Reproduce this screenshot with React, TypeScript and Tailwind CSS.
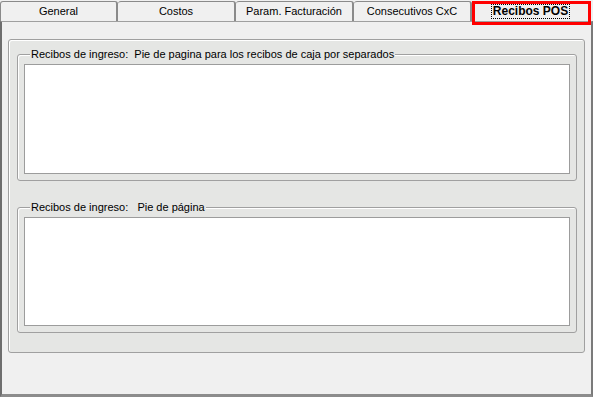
import React from "react";

const tabs = ["General", "Costos", "Param. Facturación", "Consecutivos CxC"];

function Group({ title, titleClass }: { title: string; titleClass?: string }) {
  return (
    <div className="relative h-full rounded-[3px] border border-[#a0a0a0] shadow-[inset_1px_1px_0_#ffffff] px-[6px] pt-[9px] pb-[6px]">
      <div className="absolute left-[12px] top-[-7px] bg-[#e5e6e4] px-[1px] leading-[13px] text-black whitespace-pre">
        {title}
      </div>
      <div className="h-full w-full border border-[#9c9c9c] bg-white" />
    </div>
  );
}

export default function App() {
  return (
    <div
      className="relative w-[593px] h-[397px] bg-[#f0f0f0] flex flex-col text-[11px] text-black overflow-hidden"
      style={{ fontFamily: '"Liberation Sans", Arial, sans-serif' }}
    >
      {/* tab strip */}
      <div className="flex h-[21px] pt-[1px]">
        {tabs.map((t, i) => (
          <div
            key={t}
            className={
              "w-[118px] h-[20px] flex items-center justify-center border-t border-r-2 border-[#8a8a8a] rounded-t-[3px] bg-[#f0f0f0] " +
              (i === 0 ? "border-l" : "")
            }
          >
            {t}
          </div>
        ))}
        <div className="w-[118px] h-[20px] flex items-center justify-center border-t border-r border-[#8a8a8a] rounded-t-[3px] bg-[#f0f0f0]">
          <span className="px-[1px] leading-[13px] font-bold text-[12px] outline-1 outline-dotted outline-black">
            Recibos POS
          </span>
        </div>
      </div>

      {/* tab page */}
      <div className="flex-1 border-t border-t-[#a0a0a0] border-l-2 border-l-[#6e6e6e] border-r-2 border-r-[#7a7a7a] border-b-[3px] border-b-[#8c8c8c] pl-[6px] pr-[6px] pt-[17px]">
        <div className="h-[314px] w-[577px] rounded-[3px] border border-[#a0a0a0] bg-[#e5e6e4] shadow-[inset_1px_1px_0_#ffffff] pl-[8px] pr-[7px] pt-[14px] flex flex-col">
          <div className="h-[127px]">
            <Group title={"Recibos de ingreso:  Pie de pagina para los recibos de caja por separados"} />
          </div>
          <div className="h-[126px] mt-[26px]">
            <Group title={"Recibos de ingreso:   Pie de página"} />
          </div>
        </div>
      </div>

      {/* annotation box */}
      <div className="absolute left-[472px] top-[1px] w-[119px] h-[24px] border-[3px] border-[#ff0000]" />
    </div>
  );
}
